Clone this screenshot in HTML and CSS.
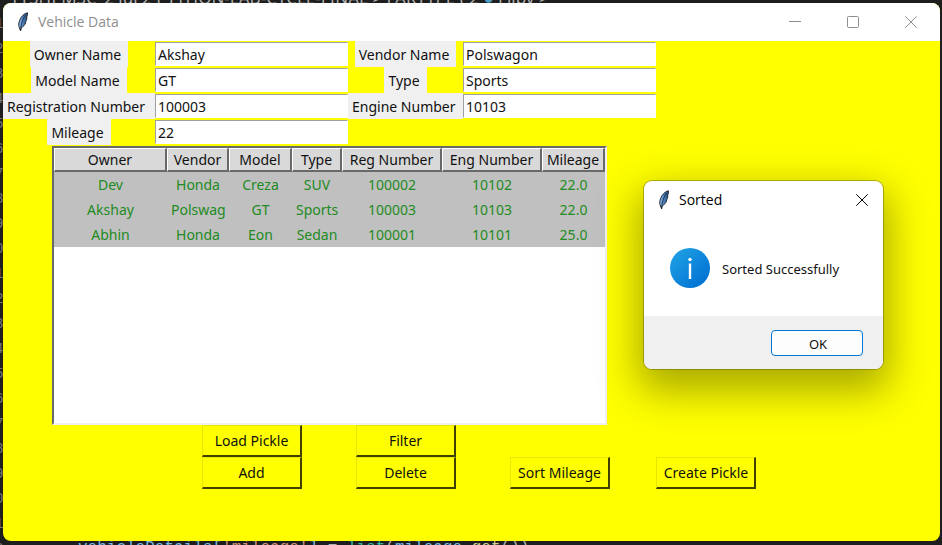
FILE: index.html
```html
<!DOCTYPE html>
<html lang="en">
<head>
<meta charset="utf-8">
<title>Vehicle Data</title>
<link rel="stylesheet" href="styles.css">
</head>
<body>
<div class="editor" aria-hidden="true">
  <div class="crumbs">TYSHI MSC_2 lul 2 PYTHON-LAB-CYCLE-FINAL &gt; FARTYPE ( 2 <span class="py">●</span> Filby &gt;</div>
  <div class="gutter">1<br>2<br>3<br>4<br>5<br>6<br>7<br>8<br>9<br>0<br>1<br>2<br>3<br>4<br>5<br>6<br>7<br>8<br>9<br>0<br>1<br>2</div>
  <div class="code"><span class="var">vehicleDetails[</span><span class="str">'mileage'</span><span class="var">]</span> = <span class="fn">list</span>(<span class="var">mileage</span>.<span class="call">get</span>())</div>
</div>
<svg class="defs" width="0" height="0" aria-hidden="true">
  <defs>
    <linearGradient id="plume" x1="0" y1="0" x2="1" y2="0">
      <stop offset="0" stop-color="#9ac3ea"/><stop offset=".45" stop-color="#4d86c8"/><stop offset="1" stop-color="#23466f"/>
    </linearGradient>
    <linearGradient id="disc" x1=".1" y1=".1" x2=".9" y2=".9">
      <stop offset="0" stop-color="#1fa0e4"/><stop offset="1" stop-color="#0070d2"/>
    </linearGradient>
    <symbol id="feather" viewBox="0 0 12 20">
      <path d="M10.400.8C7.500 1.300 4.200 4.300 2.700 8.200 1.700 11 1.300 13 2.200 15.200L3.600 19l.7-3.300c2-.9 3.400-2.600 4.300-4.900l-.6.100c1.200-1.600 1.700-3.200 1.900-5l-.5.200c.9-1.700 1.200-3.700 1-5.300z" fill="url(#plume)" stroke="#262c35" stroke-width="1"/>
      <path d="M8.800 3C6.100 6.500 4.200 10.500 3.500 18.500" fill="none" stroke="#1b222c" stroke-width=".8"/>
    </symbol>
  </defs>
</svg>

<main class="window">
  <header class="titlebar">
    <svg class="feather"><use href="#feather"/></svg>
    <h1>Vehicle Data</h1>
    <div class="controls">
      <button type="button" aria-label="Minimize"><svg viewBox="0 0 12 12"><path d="M0 5.500h12"/></svg></button>
      <button type="button" aria-label="Maximize"><svg viewBox="0 0 12 12"><rect x=".5" y=".5" width="11" height="11" rx="1"/></svg></button>
      <button type="button" aria-label="Close"><svg viewBox="0 0 12 12"><path d="M.3.3l11.400 11.400M11.700.3L.3 11.700"/></svg></button>
    </div>
  </header>

  <form class="form">
    <label for="owner">Owner Name</label><input id="owner" value="Akshay">
    <label for="vendor">Vendor Name</label><input id="vendor" value="Polswagon">
    <label for="model">Model Name</label><input id="model" value="GT">
    <label for="type">Type</label><input id="type" value="Sports">
    <label for="reg" class="fill">Registration Number</label><input id="reg" value="100003">
    <label for="eng" class="fill">Engine Number</label><input id="eng" value="10103">
    <label for="mileage">Mileage</label><input id="mileage" value="22">

    <div class="tree">
      <table>
        <colgroup><col class="c-owner"><col class="c-vendor"><col class="c-model"><col class="c-type"><col class="c-num"><col class="c-num"><col class="c-mileage"></colgroup>
        <thead>
          <tr><th>Owner</th><th>Vendor</th><th>Model</th><th>Type</th><th>Reg Number</th><th>Eng Number</th><th>Mileage</th></tr>
        </thead>
        <tbody>
          <tr><td>Dev</td><td>Honda</td><td>Creza</td><td>SUV</td><td>100002</td><td>10102</td><td>22.0</td></tr>
          <tr><td>Akshay</td><td>Polswagon</td><td>GT</td><td>Sports</td><td>100003</td><td>10103</td><td>22.0</td></tr>
          <tr><td>Abhin</td><td>Honda</td><td>Eon</td><td>Sedan</td><td>100001</td><td>10101</td><td>25.0</td></tr>
        </tbody>
      </table>
    </div>

    <button type="button" class="btn second">Load Pickle</button>
    <button type="button" class="btn">Filter</button>
    <button type="button" class="btn second">Add</button>
    <button type="button" class="btn">Delete</button>
    <button type="button" class="btn">Sort Mileage</button>
    <button type="button" class="btn">Create Pickle</button>
  </form>
</main>

<section class="dialog" role="dialog" aria-labelledby="dialog-title">
  <header class="dialog-title">
    <svg class="feather"><use href="#feather"/></svg>
    <h2 id="dialog-title">Sorted</h2>
    <button type="button" aria-label="Close"><svg viewBox="0 0 12 12"><path d="M.3.3l11.400 11.400M11.700.3L.3 11.700"/></svg></button>
  </header>
  <div class="message">
    <svg class="info" viewBox="0 0 40 40" aria-hidden="true"><circle cx="20" cy="20" r="20" fill="url(#disc)"/><circle cx="20" cy="11.500" r="1.700" fill="#fff"/><path d="M20 15.500v15.500" stroke="#fff" stroke-width="2.400"/></svg>
    <p>Sorted Successfully</p>
  </div>
  <footer><button type="button">OK</button></footer>
</section>
</body>
</html>
```
FILE: styles.css
```css
* { box-sizing: border-box; }

body {
  margin: 0;
  min-height: 100vh;
  padding: 3px 2px 4px 3px;
  display: flex;
  background: #1e1e1e;
  color: #111;
  font: 14px/20px "Noto Sans", "Open Sans", sans-serif;
  overflow: hidden;
}

button, input { font: inherit; color: inherit; }
h1, h2, p { margin: 0; font-weight: 400; }
.defs { position: absolute; }

/* Editor showing around the window edges */
.editor {
  position: absolute;
  inset: 0;
  overflow: hidden;
  color: #b0b0b0;
  font: 14px/25px "Liberation Mono", monospace;
  white-space: nowrap;
}
.crumbs { position: absolute; left: 10px; top: -12px; font: 17px/20px "Noto Sans", sans-serif; }
.py { color: #4b9fc4; }
.gutter { position: absolute; left: -5px; top: 12px; color: #777; }
.code { position: absolute; left: 78px; bottom: -16px; font-size: 16px; }
.var { color: #79b8e0; }
.str { color: #ce9178; }
.fn { color: #35b59a; }
.call { color: #d0cb90; }

/* Main window */
.window {
  position: relative;
  flex: 1;
  display: flex;
  flex-direction: column;
  border-radius: 8px;
  background: #ff0;
  overflow: hidden;
}
.titlebar {
  height: 38px;
  display: flex;
  align-items: center;
  padding-left: 14px;
  background: #fff;
  color: #8e8e8e;
}
.feather { width: 12px; height: 20px; flex: none; }
.titlebar h1 { margin-left: 9px; font: 14px/20px "Open Sans", sans-serif; }
.controls { display: flex; height: 100%; margin-left: auto; }
.controls button {
  width: 58px;
  padding: 0;
  border: 0;
  background: none;
}
.controls svg, .dialog-title button svg {
  width: 12px;
  height: 12px;
  display: block;
  margin: 0 auto;
  fill: none;
  stroke: currentColor;
  stroke-width: 1;
}

.form {
  display: grid;
  grid-template-columns: 152px 193px 115px 193px 100px;
  grid-template-rows: repeat(4, 26px) auto;
  align-items: center;
  justify-items: center;
}
.form label {
  padding: 4px 7px 2px 4px;
  background: #f0f0f0;
  white-space: nowrap;
}
.form label.fill { justify-self: stretch; }
.form label:nth-of-type(odd) { grid-column: 1; }
.form label:nth-of-type(even) { grid-column: 3; }
.form input {
  width: 100%;
  height: 24px;
  padding: 0 2px;
  border: 1px solid #fff;
  border-top-color: #a0a0a0;
  border-left-color: #a0a0a0;
  border-radius: 0;
  background: #fff;
  outline: 0;
}

.tree {
  grid-column: 1 / 5;
  margin-top: 1px;
  height: 279px;
  border: 2px solid #f0f0f0;
  border-top-color: #696969;
  border-left-color: #696969;
  background: #fff;
}
table {
  width: 551px;
  table-layout: fixed;
  border-collapse: separate;
  border-spacing: 0;
}
.c-owner { width: 113px; }
.c-vendor { width: 62px; }
.c-model { width: 63px; }
.c-type { width: 50px; }
.c-num { width: 100px; }
.c-mileage { width: 63px; }
th {
  height: 24px;
  padding: 1px 0 0;
  border: solid;
  border-width: 1px 2px 2px 1px;
  border-color: #fff #696969 #696969 #fff;
  background: #d9d9d9;
  font-weight: 400;
  line-height: 20px;
}
td {
  height: 25px;
  padding: 0;
  border: solid #c0c0c0;
  border-width: 0 4px;
  background: #c0c0c0;
  color: #228b22;
  text-align: center;
  line-height: 25px;
  overflow: hidden;
  white-space: nowrap;
}

.btn {
  width: 100px;
  height: 32px;
  padding: 1px 0 0 1px;
  border: solid;
  border-width: 1px 2px 2px 1px;
  border-color: #e6e600 #404000 #404000 #e6e600;
  background: #ff0;
  white-space: nowrap;
}
.second { grid-column: 2; }

/* Message box */
.dialog {
  position: absolute;
  left: 644px;
  top: 181px;
  width: 239px;
  border-radius: 8px;
  background: #fff;
  box-shadow: 0 0 0 1px rgba(80, 80, 0, .4), 0 16px 40px 6px rgba(0, 0, 0, .34);
  overflow: hidden;
}
.dialog-title {
  display: flex;
  align-items: center;
  height: 37px;
  padding: 0 7px 0 14px;
  color: #000;
}
.dialog-title h2 { margin-left: 9px; font: 14px/20px "Open Sans", sans-serif; }
.dialog-title button {
  width: 28px;
  height: 28px;
  margin-left: auto;
  padding: 0;
  border: 0;
  background: none;
}
.message {
  display: flex;
  align-items: center;
  gap: 12px;
  height: 98px;
  padding: 2px 26px 0;
  font-size: 13px;
  white-space: nowrap;
}
.message p { padding-top: 2px; }
.info { width: 40px; height: 40px; flex: none; }
.dialog footer {
  display: flex;
  justify-content: flex-end;
  padding: 14px 20px 13px;
  background: #f0f0f0;
  font-size: 13px;
}
.dialog footer button {
  width: 92px;
  height: 26px;
  padding: 2px 0 0 2px;
  border: 1px solid #0078d4;
  border-radius: 4px;
  background: #fdfdfd;
}
```
